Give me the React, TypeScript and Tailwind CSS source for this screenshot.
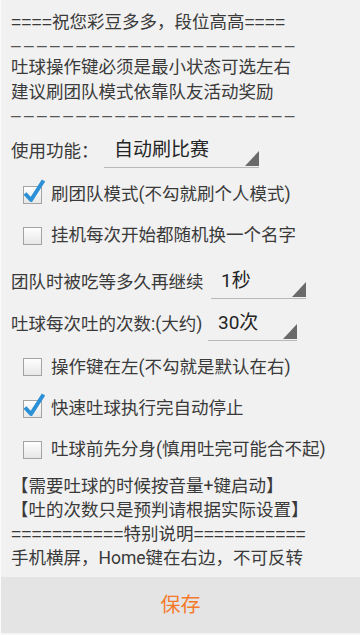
const font = { fontFamily: 'Roboto, "Noto Sans CJK SC", sans-serif' }
const latin = { fontFamily: '"Liberation Sans", "Noto Sans CJK SC", sans-serif' }

function Check({ checked }: { checked?: boolean }) {
  return (
    <svg width="26" height="26" viewBox="0 0 26 26" className="shrink-0">
      <defs>
        <linearGradient id="boxfill" x1="0" y1="0" x2="0" y2="1">
          <stop offset="0" stopColor="#ffffff" />
          <stop offset="1" stopColor="#e6e6e6" />
        </linearGradient>
      </defs>
      <rect x="2.5" y="8.5" width="18" height="17" fill="url(#boxfill)" stroke="#a3a3a3" />
      {checked && (
        <path d="M4 15.5 L10 22 L22.5 2.5" fill="none" stroke="#2b90d6" strokeWidth="4" strokeLinejoin="round" />
      )}
    </svg>
  )
}

function CheckRow({ label, checked, h }: { label: string; checked?: boolean; h: string }) {
  return (
    <div className={`flex items-center pl-[20px] ${h}`}>
      <div className="-mt-[8px]">
        <Check checked={checked} />
      </div>
      <span className="ml-[4px] text-[17.5px] text-[#3a3a3a]">{label}</span>
    </div>
  )
}

function Spinner({ value, w, pl }: { value: string; w: string; pl: string }) {
  return (
    <div className={`flex h-[34px] items-end justify-between border-b border-[#b8b8b8] ${w}`}>
      <span className={`self-center text-[19px] text-[#242424] ${pl}`}>{value}</span>
      <svg width="14" height="15" viewBox="0 0 14 15" className="mb-[1px]">
        <polygon points="14,0 14,15 0,15" fill="#6a6a6a" />
      </svg>
    </div>
  )
}

export default function App() {
  return (
    <div style={font} className="flex h-[635px] w-[360px] flex-col overflow-hidden bg-[#f1f1f1] border-l border-[#fbfbfb]">
      <div className="px-[10px] pt-[10px] text-[17.5px] text-[#3a3a3a]">
        <p style={latin} className="h-[25px] leading-[25px] whitespace-nowrap">====祝您彩豆多多，段位高高====</p>
        <p className="h-[20px] leading-[20px] whitespace-nowrap font-['Liberation_Sans'] tracking-[3.3px] text-[#555]">
          ––––––––––––––––––––––
        </p>
        <p className="h-[25px] leading-[25px] whitespace-nowrap">吐球操作键必须是最小状态可选左右</p>
        <p className="h-[25px] leading-[25px] whitespace-nowrap">建议刷团队模式依靠队友活动奖励</p>
        <p className="h-[20px] leading-[20px] whitespace-nowrap font-['Liberation_Sans'] tracking-[3.3px] text-[#555]">
          ––––––––––––––––––––––
        </p>
      </div>

      <div className="mt-[9px] flex items-center pl-[10px]">
        <span className="w-[93px] text-[17.5px] text-[#3a3a3a]">使用功能：</span>
        <Spinner value="自动刷比赛" w="w-[155px]" pl="pl-[10px]" />
      </div>

      <div className="mt-[6px]">
        <CheckRow label="刷团队模式(不勾就刷个人模式)" checked h="h-[41px]" />
        <CheckRow label="挂机每次开始都随机换一个名字" h="h-[41px]" />
      </div>

      <div className="mt-[9px] flex items-center pl-[10px]">
        <span className="w-[200px] whitespace-nowrap text-[17.5px] text-[#3a3a3a]">团队时被吃等多久再继续</span>
        <Spinner value="1秒" w="w-[95px]" pl="pl-[10px]" />
      </div>

      <div className="mt-[8px] flex items-center pl-[10px]">
        <span className="w-[197px] whitespace-nowrap text-[17.5px] text-[#3a3a3a]">吐球每次吐的次数:(大约)</span>
        <Spinner value="30次" w="w-[89px]" pl="pl-[10px]" />
      </div>

      <div className="mt-[5px]">
        <CheckRow label="操作键在左(不勾就是默认在右)" h="h-[42px]" />
        <CheckRow label="快速吐球执行完自动停止" checked h="h-[41px]" />
        <CheckRow label="吐球前先分身(慎用吐完可能合不起)" h="h-[41px]" />
      </div>

      <div className="mt-[4px] px-[10px] text-[17.5px] leading-[24px] text-[#3a3a3a]">
        <p className="whitespace-nowrap">【需要吐球的时候按音量+键启动】</p>
        <p className="whitespace-nowrap">【吐的次数只是预判请根据实际设置】</p>
        <p style={latin} className="whitespace-nowrap">===========特别说明===========</p>
        <p className="whitespace-nowrap">手机横屏，Home键在右边，不可反转</p>
      </div>

      <div className="mt-auto flex h-[58px] items-center justify-center border-b-2 border-[#f6f6f6] bg-[#e4e4e4]">
        <span className="text-[20px] text-[#f47a2b]">保存</span>
      </div>
    </div>
  )
}
